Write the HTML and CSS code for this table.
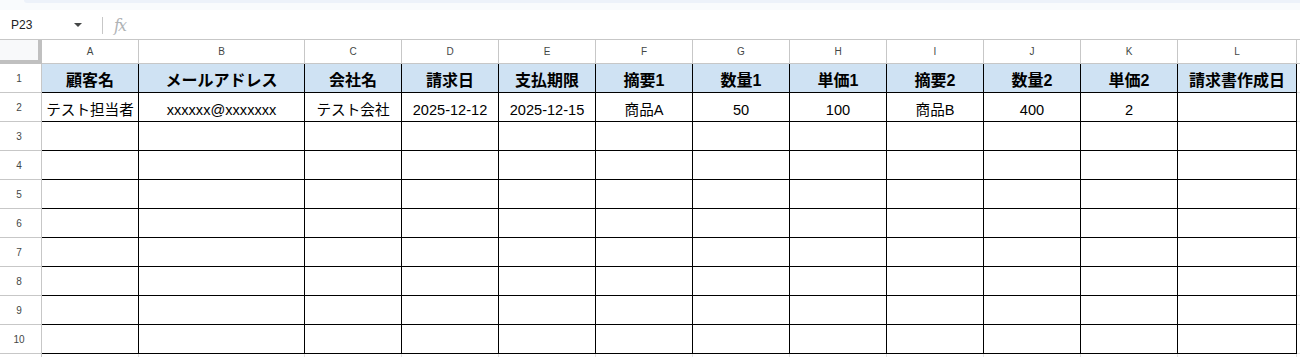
FILE: index.html
```html
<!DOCTYPE html>
<html lang="ja">
<head>
<meta charset="utf-8">
<title>Sheet</title>
<link rel="stylesheet" href="styles.css">
</head>
<body>
<div class="topstrip"><div class="toolbar-tail"></div></div>
<div class="formula">
  <div class="namebox"><span class="ref">P23</span><span class="caret"></span></div>
  <div class="sep"></div>
  <div class="fx">fx</div>
</div>
<div class="sheet">
  <div class="corner"></div>
  <div class="ch">A</div><div class="ch">B</div><div class="ch">C</div><div class="ch">D</div><div class="ch">E</div><div class="ch">F</div><div class="ch">G</div><div class="ch">H</div><div class="ch">I</div><div class="ch">J</div><div class="ch">K</div><div class="ch">L</div><div class="ch mh"></div>

  <div class="rh">1</div>
  <div class="c h">顧客名</div><div class="c h">メールアドレス</div><div class="c h">会社名</div><div class="c h">請求日</div><div class="c h">支払期限</div><div class="c h">摘要1</div><div class="c h">数量1</div><div class="c h">単価1</div><div class="c h">摘要2</div><div class="c h">数量2</div><div class="c h">単価2</div><div class="c h">請求書作成日</div><div class="m"></div>

  <div class="rh">2</div>
  <div class="c">テスト担当者</div><div class="c">xxxxxx@xxxxxxx</div><div class="c">テスト会社</div><div class="c">2025-12-12</div><div class="c">2025-12-15</div><div class="c">商品A</div><div class="c">50</div><div class="c">100</div><div class="c">商品B</div><div class="c">400</div><div class="c">2</div><div class="c"></div><div class="m"></div>

  <div class="rh">3</div>
  <div class="c"></div><div class="c"></div><div class="c"></div><div class="c"></div><div class="c"></div><div class="c"></div><div class="c"></div><div class="c"></div><div class="c"></div><div class="c"></div><div class="c"></div><div class="c"></div><div class="m"></div>

  <div class="rh">4</div>
  <div class="c"></div><div class="c"></div><div class="c"></div><div class="c"></div><div class="c"></div><div class="c"></div><div class="c"></div><div class="c"></div><div class="c"></div><div class="c"></div><div class="c"></div><div class="c"></div><div class="m"></div>

  <div class="rh">5</div>
  <div class="c"></div><div class="c"></div><div class="c"></div><div class="c"></div><div class="c"></div><div class="c"></div><div class="c"></div><div class="c"></div><div class="c"></div><div class="c"></div><div class="c"></div><div class="c"></div><div class="m"></div>

  <div class="rh">6</div>
  <div class="c"></div><div class="c"></div><div class="c"></div><div class="c"></div><div class="c"></div><div class="c"></div><div class="c"></div><div class="c"></div><div class="c"></div><div class="c"></div><div class="c"></div><div class="c"></div><div class="m"></div>

  <div class="rh">7</div>
  <div class="c"></div><div class="c"></div><div class="c"></div><div class="c"></div><div class="c"></div><div class="c"></div><div class="c"></div><div class="c"></div><div class="c"></div><div class="c"></div><div class="c"></div><div class="c"></div><div class="m"></div>

  <div class="rh">8</div>
  <div class="c"></div><div class="c"></div><div class="c"></div><div class="c"></div><div class="c"></div><div class="c"></div><div class="c"></div><div class="c"></div><div class="c"></div><div class="c"></div><div class="c"></div><div class="c"></div><div class="m"></div>

  <div class="rh">9</div>
  <div class="c"></div><div class="c"></div><div class="c"></div><div class="c"></div><div class="c"></div><div class="c"></div><div class="c"></div><div class="c"></div><div class="c"></div><div class="c"></div><div class="c"></div><div class="c"></div><div class="m"></div>

  <div class="rh">10</div>
  <div class="c"></div><div class="c"></div><div class="c"></div><div class="c"></div><div class="c"></div><div class="c"></div><div class="c"></div><div class="c"></div><div class="c"></div><div class="c"></div><div class="c"></div><div class="c"></div><div class="m"></div>

  <div class="rh rh-last"></div>
  <div class="e"></div><div class="e"></div><div class="e"></div><div class="e"></div><div class="e"></div><div class="e"></div><div class="e"></div><div class="e"></div><div class="e"></div><div class="e"></div><div class="e"></div><div class="e"></div><div class="m"></div>
</div>
</body>
</html>
```
FILE: styles.css
```css
html, body {
  margin: 0;
  padding: 0;
  width: 1300px;
  height: 357px;
  overflow: hidden;
  background: #ffffff;
  font-family: "Liberation Sans", "Noto Sans CJK JP", Arial, sans-serif;
  color: #000;
}

.topstrip {
  height: 10px;
  background: #f9fbfd;
}

.toolbar-tail {
  margin-left: 24px;
  height: 3px;
  background: #edf2fa;
  border-bottom-left-radius: 6px;
}

.formula {
  height: 29px;
  border-bottom: 1px solid #c7c7c7;
  display: flex;
  align-items: center;
  background: #fff;
}

.namebox {
  width: 92px;
  display: flex;
  align-items: center;
  justify-content: space-between;
  padding-left: 11px;
  padding-right: 10px;
  box-sizing: border-box;
  height: 100%;
}

.ref {
  font-size: 12px;
  color: #202124;
  line-height: 14px;
  padding-top: 1px;
}

.caret {
  width: 0;
  height: 0;
  border-left: 4px solid transparent;
  border-right: 4px solid transparent;
  border-top: 4px solid #444746;
  margin-top: 1px;
}

.sep {
  width: 1px;
  height: 17px;
  background: #c7c7c7;
  margin-left: 10px;
  margin-top: 1px;
}

.fx {
  margin-left: 11px;
  font-family: "DejaVu Serif", "Liberation Serif", serif;
  font-style: italic;
  font-size: 16px;
  color: #b0b3b6;
  letter-spacing: -2px;
  line-height: 16px;
  padding-top: 2px;
}

.sheet {
  display: grid;
  grid-template-columns: 42px 97px 166px repeat(9, 97px) 119px 1fr;
  grid-template-rows: 24px repeat(11, 29px);
  height: 317px;
  overflow: hidden;
}

.sheet > div {
  box-sizing: border-box;
}

.corner {
  background: #f8f9fa;
  border-right: 4px solid #c0c0c0;
  border-bottom: 4px solid #c0c0c0;
}

.ch {
  border-right: 1px solid #c7c7c7;
  border-bottom: 1px solid #c7c7c7;
  display: flex;
  align-items: center;
  justify-content: center;
  font-size: 10px;
  color: #444746;
}

.mh {
  border-right: none;
}

.rh {
  border-right: 1px solid #c7c7c7;
  border-bottom: 1px solid #c7c7c7;
  display: flex;
  align-items: center;
  justify-content: center;
  font-size: 10px;
  color: #444746;
  padding-right: 3px;
}

.c {
  border-right: 1px solid #000;
  border-bottom: 1px solid #000;
  display: flex;
  align-items: center;
  justify-content: center;
  font-size: 14.6px;
  line-height: 18px;
  padding-top: 5px;
  white-space: nowrap;
  overflow: hidden;
}

.c.h {
  background: #cfe2f3;
  font-weight: bold;
  font-size: 16px;
}

.m {
  border-bottom: 1px solid #e2e2e2;
}

.e {
  border-right: 1px solid #e2e2e2;
}
```
